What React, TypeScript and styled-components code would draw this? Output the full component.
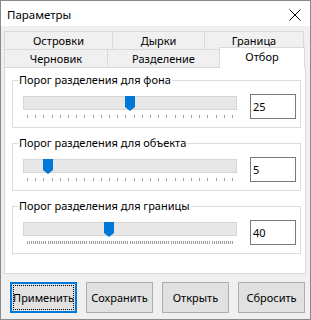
import React from "react";
import styled, { createGlobalStyle } from "styled-components";

const Global = createGlobalStyle`
  html, body { margin: 0; padding: 0; background: #f0f0f0; }
  * { box-sizing: border-box; }
  body { font-family: "Noto Sans", "Segoe UI", sans-serif; font-size: 11px; color: #000; }
`;

const FONT = `"Noto Sans", "Segoe UI", sans-serif`;

const Window = styled.div`
  width: 311px;
  height: 320px;
  border: 1px solid #8a8a8a;
  display: flex;
  flex-direction: column;
  background: #f0f0f0;
  font-family: ${FONT};
  font-size: 11px;
`;

const TitleBar = styled.div`
  height: 25px;
  background: #fff;
  display: flex;
  align-items: center;
  justify-content: space-between;
  padding: 0 9px 0 6px;
`;

const Title = styled.span`
  font-size: 11.5px;
  line-height: 1;
  margin-top: 2px;
`;

const CloseIcon = styled.svg`
  display: block;
  margin-top: 3px;
`;

const Body = styled.div`
  flex: 1;
  display: flex;
  flex-direction: column;
  padding: 5px 4px 6px 3px;
`;

const TabsArea = styled.div`
  height: 36px;
  display: flex;
  flex-direction: column;
  position: relative;
  z-index: 2;
`;

const TabRow = styled.div`
  height: 18px;
  display: flex;
  align-items: flex-end;
`;

const Tab = styled.div<{ $w: number; $active?: boolean }>`
  width: ${(p) => p.$w}px;
  height: ${(p) => (p.$active ? 21 : 18)}px;
  margin-right: -1px;
  margin-bottom: ${(p) => (p.$active ? -1 : 0)}px;
  border: 1px solid #d9d9d9;
  border-bottom: none;
  background: ${(p) => (p.$active ? "#fff" : "#f0f0f0")};
  display: flex;
  align-items: center;
  justify-content: center;
  padding-bottom: ${(p) => (p.$active ? 3 : 0)}px;
  font-size: 11px;
  line-height: 1;
  position: relative;
  z-index: ${(p) => (p.$active ? 3 : 1)};
`;

const Panel = styled.div`
  height: 207px;
  width: 302px;
  background: #fff;
  border: 1px solid #d9d9d9;
  padding: 12px 4px 0 7px;
  display: flex;
  flex-direction: column;
  gap: 15px;
`;

const Group = styled.div`
  position: relative;
  height: 48px;
  border: 1px solid #dcdcdc;
  padding: 13px 4px 0 10px;
  display: flex;
  align-items: flex-start;
  gap: 13px;
`;

const GroupLabel = styled.span`
  position: absolute;
  top: -9px;
  left: 5px;
  padding: 0 1px;
  background: #fff;
  font-size: 11px;
  line-height: 16px;
`;

const SliderCol = styled.div`
  width: 214px;
  padding-top: 2px;
  display: flex;
  flex-direction: column;
`;

const Track = styled.div`
  position: relative;
  height: 14px;
  background: #e7e7e7;
  border: 1px solid #d6d6d6;
`;

const Thumb = styled.svg`
  position: absolute;
  top: -1px;
  display: block;
`;

const Ticks = styled.svg`
  display: block;
  margin: 5px 0 0 4px;
`;

const ValueBox = styled.div`
  width: 46px;
  height: 25px;
  border: 1px solid #7a7a7a;
  background: #fff;
  display: flex;
  align-items: center;
  padding-left: 2px;
  font-size: 11px;
  line-height: 1;
`;

const ButtonRow = styled.div`
  margin-top: 8px;
  margin-left: 6px;
  display: flex;
  gap: 9px;
`;

const Button = styled.div<{ $default?: boolean }>`
  width: 67px;
  height: 31px;
  background: #e1e1e1;
  border: ${(p) => (p.$default ? "2px solid #0078d7" : "1px solid #adadad")};
  display: flex;
  align-items: center;
  justify-content: center;
  font-size: 11px;
  line-height: 1;
  ${(p) => (p.$default ? "outline: 1px dotted #000; outline-offset: -4px;" : "")}
`;

type SliderProps = { label: string; value: number; max: number; step: number };

const TICK_SPAN = 205;

function Slider({ label, value, max, step }: SliderProps) {
  const n = Math.round(max / step);
  const ticks = Array.from({ length: n + 1 }, (_, i) => Math.round((i * TICK_SPAN) / n) + 0.5);
  const left = 3 + (value / max) * TICK_SPAN - 5;
  return (
    <Group>
      <GroupLabel>{label}</GroupLabel>
      <SliderCol>
        <Track>
          <Thumb width="10" height="15" viewBox="0 0 10 15" style={{ left }}>
            <path d="M0 0H10V11L5 15L0 11Z" fill="#0078d7" />
          </Thumb>
        </Track>
        <Ticks width="207" height="3" viewBox="0 0 207 3">
          {ticks.map((x, i) => (
            <line key={i} x1={x} y1="0" x2={x} y2="3" stroke="#a0a0a0" strokeWidth="1" />
          ))}
        </Ticks>
      </SliderCol>
      <ValueBox>{value}</ValueBox>
    </Group>
  );
}

export default function App() {
  return (
    <>
      <Global />
      <Window>
        <TitleBar>
          <Title>Параметры</Title>
          <CloseIcon width="12" height="12" viewBox="0 0 12 12">
            <path d="M0.5 0.5L11.5 11.5M11.5 0.5L0.5 11.5" stroke="#000" strokeWidth="1" />
          </CloseIcon>
        </TitleBar>
        <Body>
          <TabsArea>
            <TabRow>
              <Tab $w={109}>Островки</Tab>
              <Tab $w={93}>Дырки</Tab>
              <Tab $w={100}>Граница</Tab>
            </TabRow>
            <TabRow>
              <Tab $w={104}>Черновик</Tab>
              <Tab $w={113}>Разделение</Tab>
              <Tab $w={86} $active>
                Отбор
              </Tab>
            </TabRow>
          </TabsArea>
          <Panel>
            <Slider label="Порог разделения для фона" value={25} max={50} step={2} />
            <Slider label="Порог разделения для объекта" value={5} max={50} step={2} />
            <Slider label="Порог разделения для границы" value={40} max={100} step={1} />
          </Panel>
          <ButtonRow>
            <Button $default>Применить</Button>
            <Button>Сохранить</Button>
            <Button>Открыть</Button>
            <Button>Сбросить</Button>
          </ButtonRow>
        </Body>
      </Window>
    </>
  );
}
